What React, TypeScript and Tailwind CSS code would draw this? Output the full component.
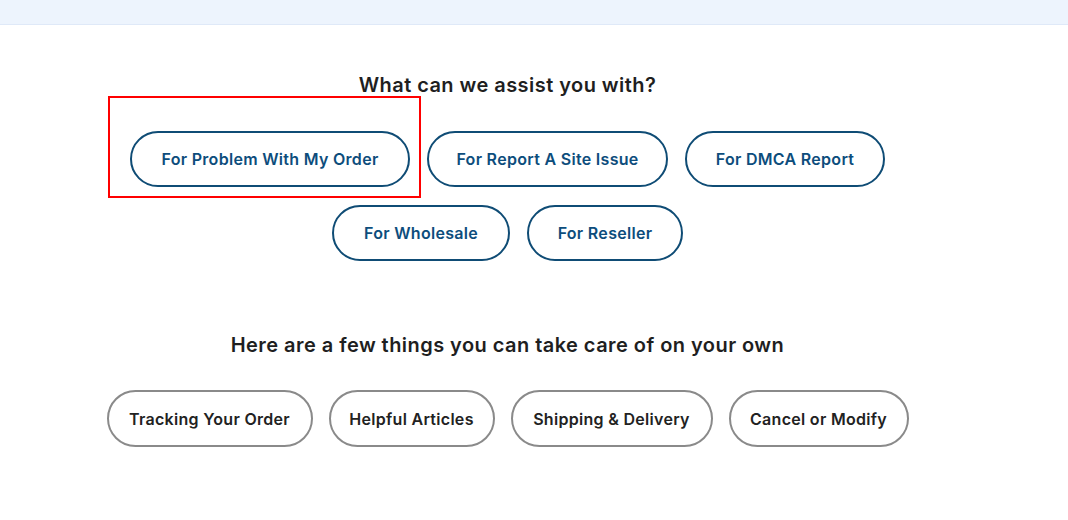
import React from 'react';

const assistOptions = [
  { label: 'For Problem With My Order', width: 'w-[280px]', highlighted: true },
  { label: 'For Report A Site Issue', width: 'w-[241px]' },
  { label: 'For DMCA Report', width: 'w-[200px]' },
];

const assistOptionsRow2 = [
  { label: 'For Wholesale', width: 'w-[178px]' },
  { label: 'For Reseller', width: 'w-[156px]' },
];

const selfServe = [
  { label: 'Tracking Your Order', width: 'w-[206px]' },
  { label: 'Helpful Articles', width: 'w-[166px]' },
  { label: 'Shipping & Delivery', width: 'w-[202px]' },
  { label: 'Cancel or Modify', width: 'w-[180px]' },
];

function AssistButton({ label, width, highlighted }: { label: string; width: string; highlighted?: boolean }) {
  return (
    <div className="relative">
      {highlighted && (
        <span className="pointer-events-none absolute -top-[35px] -left-[22px] -right-[11px] -bottom-[11px] border-2 border-[#ff0000]" />
      )}
      <button
        type="button"
        className={`${width} h-[56px] rounded-full border-2 border-[#0f4c75] bg-white text-[16px] font-semibold tracking-[0.3px] text-[#0d4d7c]`}
      >
        {label}
      </button>
    </div>
  );
}

export default function App() {
  return (
    <div className="min-h-[520px] bg-white" style={{ fontFamily: 'Inter, "Open Sans", sans-serif' }}>
      {/* Top band */}
      <div className="h-[25px] border-b border-[#dfe9f8] bg-[#edf4fd]" />

      <div className="w-[1015px] flex flex-col items-center">
        <h2 className="mt-[45px] h-[30px] text-[20px] leading-[30px] font-semibold tracking-[0.45px] text-[#1f1f1f]">
          What can we assist you with?
        </h2>

        <div className="mt-[31px] flex gap-[17px]">
          {assistOptions.map(o => (
            <AssistButton key={o.label} {...o} />
          ))}
        </div>
        <div className="mt-[18px] flex gap-[17px]">
          {assistOptionsRow2.map(o => (
            <AssistButton key={o.label} {...o} />
          ))}
        </div>

        <h2 className="mt-[69px] h-[30px] text-[20px] leading-[30px] font-semibold tracking-[0.45px] text-[#1f1f1f]">
          Here are a few things you can take care of on your own
        </h2>

        <div className="mt-[30px] flex gap-[16px]">
          {selfServe.map(o => (
            <button
              key={o.label}
              type="button"
              className={`${o.width} h-[57px] rounded-full border-2 border-[#8a8a8a] bg-white text-[16px] font-semibold tracking-[0.3px] text-[#222]`}
            >
              {o.label}
            </button>
          ))}
        </div>
      </div>
    </div>
  );
}
